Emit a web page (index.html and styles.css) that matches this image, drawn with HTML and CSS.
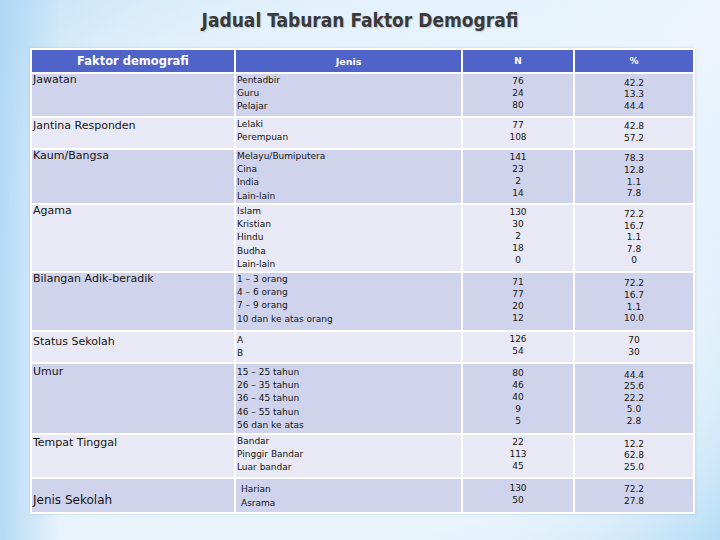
FILE: index.html
```html
<!DOCTYPE html>
<html>
<head>
<meta charset="utf-8">
<link rel="stylesheet" href="styles.css">
</head>
<body>
<h1 class="title">Jadual Taburan Faktor Demografi</h1>
<table class="demo">
  <colgroup>
    <col class="c-faktor"><col class="c-jenis"><col class="c-n"><col class="c-pct">
  </colgroup>
  <thead>
    <tr class="head">
      <th class="h-faktor">Faktor demografi</th>
      <th class="h-jenis">Jenis</th>
      <th class="h-small">N</th>
      <th class="h-small">%</th>
    </tr>
  </thead>
  <tbody>
    <tr class="dark r42">
      <td class="faktor">Jawatan</td>
      <td class="jenis">Pentadbir<br>Guru<br>Pelajar</td>
      <td class="n">76<br>24<br>80</td>
      <td class="pct">42.2<br>13.3<br>44.4</td>
    </tr>
    <tr class="light r30">
      <td class="faktor pad-sm">Jantina Responden</td>
      <td class="jenis">Lelaki<br>Perempuan</td>
      <td class="n">77<br>108</td>
      <td class="pct">42.8<br>57.2</td>
    </tr>
    <tr class="dark r53">
      <td class="faktor">Kaum/Bangsa</td>
      <td class="jenis">Melayu/Bumiputera<br>Cina<br>India<br>Lain-lain</td>
      <td class="n">141<br>23<br>2<br>14</td>
      <td class="pct">78.3<br>12.8<br>1.1<br>7.8</td>
    </tr>
    <tr class="light r66">
      <td class="faktor">Agama</td>
      <td class="jenis">Islam<br>Kristian<br>Hindu<br>Budha<br>Lain-lain</td>
      <td class="n">130<br>30<br>2<br>18<br>0</td>
      <td class="pct">72.2<br>16.7<br>1.1<br>7.8<br>0</td>
    </tr>
    <tr class="dark r57">
      <td class="faktor">Bilangan Adik-beradik</td>
      <td class="jenis">1 – 3 orang<br>4 – 6 orang<br>7 – 9 orang<br>10 dan ke atas orang</td>
      <td class="n">71<br>77<br>20<br>12</td>
      <td class="pct">72.2<br>16.7<br>1.1<br>10.0</td>
    </tr>
    <tr class="light r30">
      <td class="faktor pad-lg">Status Sekolah</td>
      <td class="jenis pad-md">A<br>B</td>
      <td class="n">126<br>54</td>
      <td class="pct">70<br>30</td>
    </tr>
    <tr class="dark r69">
      <td class="faktor pad-sm">Umur</td>
      <td class="jenis pad-sm">15 – 25 tahun<br>26 – 35 tahun<br>36 – 45 tahun<br>46 – 55 tahun<br>56 dan ke atas</td>
      <td class="n">80<br>46<br>40<br>9<br>5</td>
      <td class="pct">44.4<br>25.6<br>22.2<br>5.0<br>2.8</td>
    </tr>
    <tr class="light r42">
      <td class="faktor pad-sm">Tempat Tinggal</td>
      <td class="jenis">Bandar<br>Pinggir Bandar<br>Luar bandar</td>
      <td class="n">22<br>113<br>45</td>
      <td class="pct">12.2<br>62.8<br>25.0</td>
    </tr>
    <tr class="dark r33">
      <td class="faktor mid">Jenis Sekolah</td>
      <td class="jenis mid indent">Harian<br>Asrama</td>
      <td class="n">130<br>50</td>
      <td class="pct">72.2<br>27.8</td>
    </tr>
  </tbody>
</table>
</body>
</html>
```

FILE: styles.css
```css
html, body {
  margin: 0;
  padding: 0;
}
body {
  width: 720px;
  height: 540px;
  overflow: hidden;
  font-family: "DejaVu Sans", Verdana, sans-serif;
  color: #151515;
  background:
    linear-gradient(90deg, rgba(172, 214, 244, 0.85) 0px, rgba(172, 214, 244, 0) 60px),
    radial-gradient(ellipse 520px 420px at 360px 300px, #f2f8fd 0%, #e9f4fc 55%, rgba(233, 244, 252, 0) 100%),
    linear-gradient(135deg, #c2e1f7 0%, #e3f1fb 40%, #eef6fc 60%, #cfe8f9 82%, #a6d5f4 100%);
}
.title {
  margin: 0;
  height: 48px;
  box-sizing: border-box;
  padding-top: 8px;
  text-align: center;
  font-family: "DejaVu Sans Condensed", "DejaVu Sans", sans-serif;
  font-weight: bold;
  font-size: 19px;
  line-height: 24px;
  color: #3a3a3a;
  text-shadow: 1px 1px 1px rgba(0, 0, 0, 0.18);
}
.demo {
  margin-left: 30px;
  width: 665px;
  table-layout: fixed;
  border-collapse: separate;
  border-spacing: 2px;
  background: #ffffff;
  box-shadow: 0 0 3px rgba(120, 160, 200, 0.35);
}
.c-faktor { width: 202px; }
.c-jenis { width: 225px; }
.c-n { width: 110px; }
.c-pct { width: 118px; }

.head th {
  height: 22px;
  padding: 0;
  background: #4f63c8;
  color: #ffffff;
  font-weight: bold;
  text-align: center;
  vertical-align: middle;
}
.h-faktor { font-size: 11.5px; }
.h-jenis { font-size: 9.5px; }
.h-small { font-size: 9px; }

td {
  padding: 0;
}
.dark td { background: #d0d3ec; }
.light td { background: #e8e9f4; }

.r30 { height: 30px; }
.r33 { height: 33px; }
.r42 { height: 42px; }
.r53 { height: 53px; }
.r57 { height: 57px; }
.r66 { height: 66px; }
.r69 { height: 69px; }

.faktor {
  vertical-align: top;
  padding-left: 1px;
  padding-top: 0;
  font-size: 11px;
  line-height: 12px;
}
.jenis {
  vertical-align: top;
  padding-left: 1px;
  font-size: 9px;
  line-height: 13.2px;
}
.n {
  vertical-align: middle;
  text-align: center;
  font-size: 9px;
  line-height: 12px;
  padding-bottom: 4px;
}
.pct {
  vertical-align: middle;
  text-align: center;
  font-size: 9px;
  line-height: 11.6px;
}
.pad-sm { padding-top: 2px; }
.pad-md { padding-top: 2px; }
.pad-lg { padding-top: 4px; }
.faktor.mid {
  vertical-align: middle;
  padding-top: 8px;
  font-size: 12px;
}
.jenis.mid {
  vertical-align: middle;
  padding-top: 2px;
}
.indent { padding-left: 5px; }
```
